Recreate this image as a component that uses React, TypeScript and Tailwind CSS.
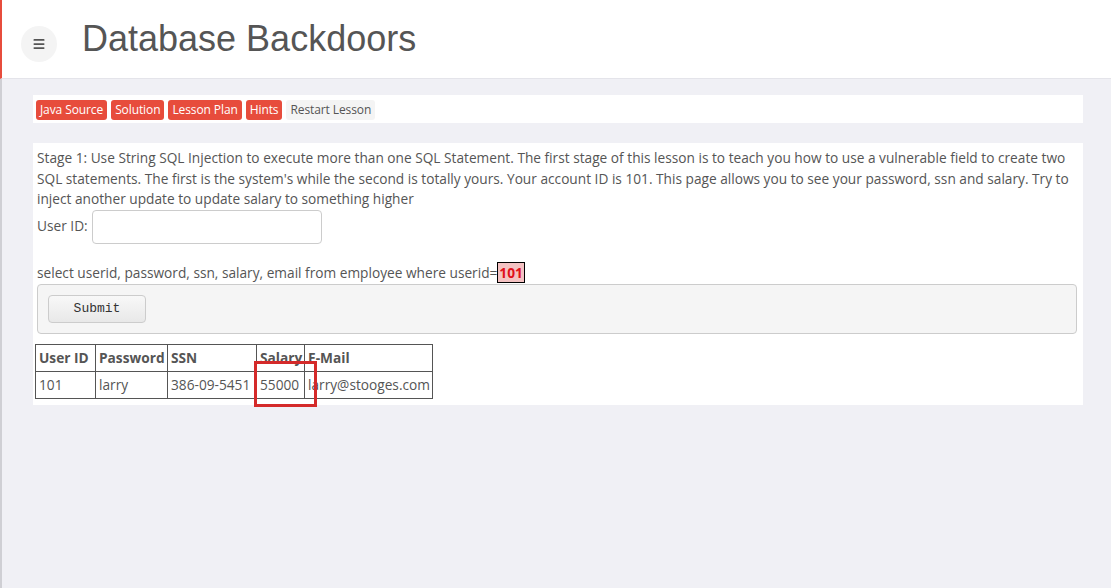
import { Menu } from 'lucide-react'

export default function App() {
  const cell = 'border border-[#555] px-[3px] h-[27px] align-middle whitespace-nowrap overflow-hidden'

  return (
    <div className="min-h-[588px] bg-[#f0f0f5] border-l-2 border-[#cfcfd4] font-['Open_Sans',sans-serif] text-[#555] relative">
      {/* header */}
      <div className="h-[79px] bg-white border-b border-[#e4e4ea] flex items-center relative -ml-[2px] border-l-2 border-l-[#e74c3c]">
        <div className="ml-[19px] w-[36px] h-[36px] rounded-full bg-[#f4f4f4] flex items-center justify-center mt-[10px]">
          <Menu size={14} strokeWidth={3} className="text-[#555]" />
        </div>
        <h1 className="ml-[25px] font-['Liberation_Sans',sans-serif] text-[36px] text-[#555] leading-none -mt-[1px]">
          Database Backdoors
        </h1>
      </div>

      <div className="pl-[31px] pr-[28px] pt-[16px]">
        {/* lesson buttons */}
        <div className="bg-white h-[28px] flex items-center gap-[4px] px-[3px] text-[12px] tracking-[-0.1px] pt-[2px]">
          {['Java Source', 'Solution', 'Lesson Plan', 'Hints'].map(b => (
            <span key={b} className="bg-[#e74c3c] text-white rounded-[3px] px-[4px] h-[20px] leading-[20px]">
              {b}
            </span>
          ))}
          <span className="bg-[#f4f4f4] text-[#555] rounded-[3px] px-[4px] h-[20px] leading-[20px]">
            Restart Lesson
          </span>
        </div>

        {/* lesson content */}
        <div className="bg-white mt-[20px] pl-[4px] pr-[4px] pt-[5px] pb-[6px] text-[13.7px] leading-[20.5px]">
          <p>
            Stage 1: Use String SQL Injection to execute more than one SQL Statement. The first stage of this lesson is
            to teach you how to use a vulnerable field to create two SQL statements. The first is the system's while the
            second is totally yours. Your account ID is 101. This page allows you to see your password, ssn and salary.
            Try to inject another update to update salary to something higher
          </p>
          <div className="flex items-center gap-[4px]">
            <span>User ID:</span>
            <input className="w-[230px] h-[34px] border border-[#ccc] rounded-[4px] bg-white" />
          </div>
          <p className="mt-[19px]">
            select userid, password, ssn, salary, email from employee where userid=
            <span className="bg-[#f4c2c2] text-[#e0101a] font-bold border border-black px-[1px]">101</span>
          </p>
          <div className="mt-[1px] mr-[2px] bg-[#f5f5f5] border border-[#ccc] rounded-[4px] h-[50px] flex items-center pl-[10px]">
            <button className="w-[98px] h-[28px] border border-[#ccc] rounded-[4px] bg-gradient-to-b from-[#f8f8f8] to-[#e8e8e8] font-['Liberation_Mono',monospace] text-[13px] text-[#333]">
              Submit
            </button>
          </div>
          <table className="mt-[10px] -ml-[2px] border-collapse table-fixed w-[397px] text-[13.7px]">
            <colgroup>
              <col className="w-[60px]" />
              <col className="w-[72px]" />
              <col className="w-[89px]" />
              <col className="w-[48px]" />
              <col className="w-[128px]" />
            </colgroup>
            <thead>
              <tr className="font-bold text-left">
                <th className={cell}>User ID</th>
                <th className={cell}>Password</th>
                <th className={cell}>SSN</th>
                <th className={cell}>Salary</th>
                <th className={cell}>E-Mail</th>
              </tr>
            </thead>
            <tbody>
              <tr>
                <td className={cell}>101</td>
                <td className={cell}>larry</td>
                <td className={cell}>386-09-5451</td>
                <td className={cell}>55000</td>
                <td className={cell}>larry@stooges.com</td>
              </tr>
            </tbody>
          </table>
        </div>
      </div>

      {/* highlight marker */}
      <div className="absolute left-[252px] top-[361px] w-[63px] h-[46px] border-[3px] border-[#d42a2a]" />
    </div>
  )
}
